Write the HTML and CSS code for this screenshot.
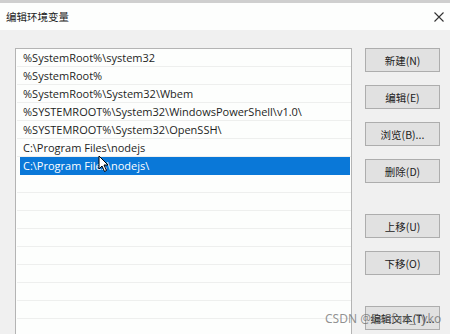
FILE: index.html
```html
<!DOCTYPE html>
<html>
<head>
<meta charset="utf-8">
<link rel="stylesheet" href="styles.css">
</head>
<body>
<div class="dialog">
  <div class="titlebar">
    <span class="title">编辑环境变量</span>
    <svg class="close" width="10" height="10" viewBox="0 0 10 10"><path d="M0.5 0.5 L9.5 9.5 M9.5 0.5 L0.5 9.5" stroke="#333" stroke-width="1.1" fill="none"/></svg>
  </div>
  <div class="content">
    <div class="list">
      <div class="row"><span>%SystemRoot%\system32</span></div>
      <div class="row"><span>%SystemRoot%</span></div>
      <div class="row"><span>%SystemRoot%\System32\Wbem</span></div>
      <div class="row"><span>%SYSTEMROOT%\System32\WindowsPowerShell\v1.0\</span></div>
      <div class="row"><span>%SYSTEMROOT%\System32\OpenSSH\</span></div>
      <div class="row"><span>C:\Program Files\nodejs</span></div>
      <div class="row selected"><span>C:\Program Files\nodejs\</span></div>
      <div class="row"></div>
      <div class="row"></div>
      <div class="row"></div>
      <div class="row"></div>
      <div class="row"></div>
      <div class="row"></div>
      <div class="row"></div>
      <div class="row"></div>
      <svg class="cursor" width="12" height="18" viewBox="0 0 12 18"><path d="M1 1 L1 14 L4 11 L6.5 16.5 L8.5 15.5 L6 10 L10 10 Z" fill="#fff" stroke="#000" stroke-width="1" stroke-linejoin="round"/></svg>
    </div>
    <div class="buttons">
      <div class="group">
        <button class="btn">新建(N)</button>
        <button class="btn">编辑(E)</button>
        <button class="btn">浏览(B)...</button>
        <button class="btn">删除(D)</button>
      </div>
      <div class="group moves">
        <button class="btn">上移(U)</button>
        <button class="btn">下移(O)</button>
      </div>
      <div class="group last">
        <button class="btn">编辑文本(T)...</button>
      </div>
    </div>
  </div>
  <div class="watermark">CSDN @Fanfan_Tyko</div>
</div>
</body>
</html>
```
FILE: styles.css
```css
html, body {
  margin: 0;
  padding: 0;
  width: 450px;
  height: 334px;
  overflow: hidden;
  background: #f0f0f0;
  font-family: "Segoe UI", "Open Sans", "Noto Sans CJK SC", sans-serif;
  color: #1e1e1e;
}
.dialog {
  position: relative;
  width: 450px;
  height: 334px;
}
.titlebar {
  height: 27px;
  border-top: 3px solid #cfcfcf;
  background: #fdfefd;
  display: flex;
  align-items: center;
  justify-content: space-between;
  padding: 0 6px 0 6px;
}
.title {
  font-family: "Noto Sans CJK SC", sans-serif;
  font-size: 10.5px;
  color: #222;
}
.close {
  margin-right: 0;
  margin-top: 1px;
}
.content {
  display: flex;
  padding: 18px 0 0 15px;
}
.list {
  position: relative;
  width: 337px;
  height: 300px;
  background: #fdfefd;
  border: 1px solid #b4b4b4;
  border-bottom: none;
  box-sizing: border-box;
  padding-left: 1px;
  overflow: hidden;
}
.row {
  height: 18px;
  border-bottom: 1px solid #eeefee;
  box-sizing: border-box;
  display: flex;
  align-items: center;
  font-size: 11px;
  padding-left: 5px;
  white-space: nowrap;
}
.row span {
  padding-left: 1px;
}
.row.selected {
  background: #0a78d8;
  color: #fff;
  margin: 0 1px 0 3px;
  padding-left: 2px;
  border-bottom-color: #0a78d8;
}
.cursor {
  position: absolute;
  left: 82px;
  top: 106px;
}
.buttons {
  margin-left: 13px;
  display: flex;
  flex-direction: column;
}
.group {
  display: flex;
  flex-direction: column;
  gap: 13px;
}
.moves {
  margin-top: 31px;
  gap: 13px;
}
.last {
  margin-top: 31px;
}
.btn {
  width: 75px;
  height: 24px;
  margin: 0;
  padding: 0;
  background: #e1e1e1;
  border: 1px solid #adadad;
  font-family: "Noto Sans CJK SC", sans-serif;
  font-size: 10.5px;
  color: #222;
  text-align: center;
}
.watermark {
  position: absolute;
  left: 325px;
  top: 310px;
  font-family: "Noto Sans", sans-serif;
  font-size: 12px;
  color: rgba(110, 110, 110, 0.75);
  white-space: nowrap;
}
```
